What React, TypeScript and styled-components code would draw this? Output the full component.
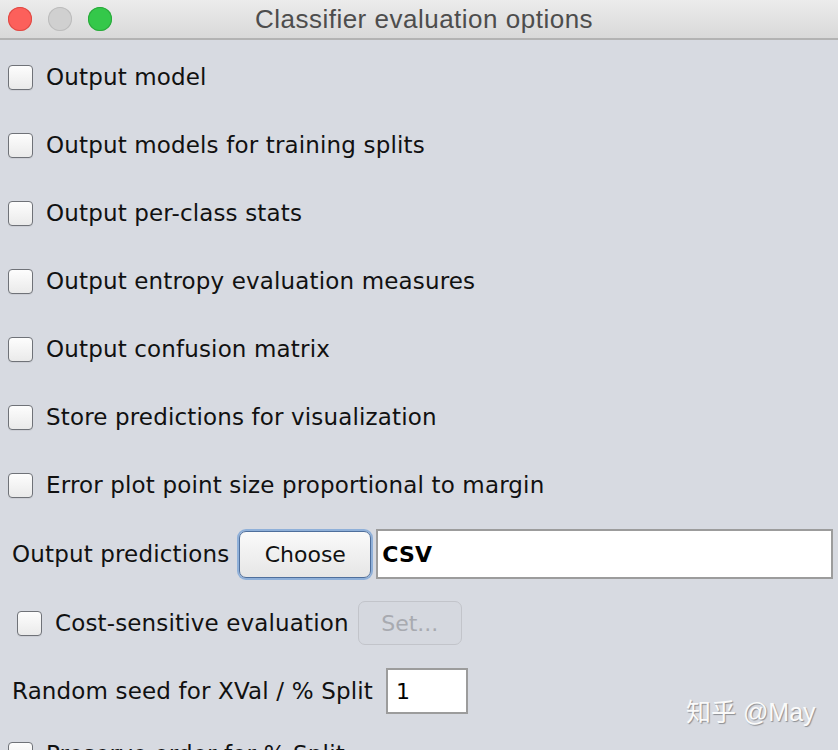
import styled, { createGlobalStyle } from 'styled-components';

const Global = createGlobalStyle`
  html, body {
    margin: 0;
    padding: 0;
    width: 838px;
    height: 750px;
    overflow: hidden;
    background: #d7dae1;
  }
`;

const Window = styled.div`
  position: relative;
  width: 838px;
  height: 750px;
  overflow: hidden;
  background: #d7dae1;
  font-family: "DejaVu Sans", sans-serif;
  color: #111;
`;

const TitleBar = styled.div`
  height: 38px;
  display: flex;
  align-items: center;
  justify-content: center;
  background: linear-gradient(#ececec, #d9d9d9);
  border-bottom: 2px solid #b3b3b3;
  position: relative;
`;

const Lights = styled.div`
  position: absolute;
  left: 8px;
  top: 7px;
  display: flex;
  gap: 16px;
`;

const Light = styled.span<{ $c: string; $b: string }>`
  width: 24px;
  height: 24px;
  border-radius: 50%;
  background: ${p => p.$c};
  box-shadow: inset 0 0 0 1px ${p => p.$b};
`;

const Title = styled.div`
  font-family: "Liberation Sans", Arial, sans-serif;
  font-size: 26px;
  letter-spacing: 0.5px;
  color: #4d4d4d;
  margin-left: 10px;
`;

const Body = styled.div`
  display: flex;
  flex-direction: column;
  padding-top: 3px;
`;

const CheckRow = styled.label<{ $indent?: number; $h?: number }>`
  display: flex;
  align-items: center;
  height: ${p => p.$h ?? 68}px;
  padding-left: ${p => p.$indent ?? 8}px;
  font-size: 23px;
  letter-spacing: 0.15px;
  white-space: nowrap;
`;

const Box = styled.span`
  width: 23px;
  height: 23px;
  border: 1px solid #6f7278;
  border-radius: 4px;
  background: linear-gradient(#fdfdfd, #eaeaea);
  box-shadow: 0 1px 0 rgba(0, 0, 0, 0.05);
  margin-right: 13px;
  flex: none;
`;

const FieldRow = styled.div<{ $h: number }>`
  display: flex;
  align-items: center;
  height: ${p => p.$h}px;
  padding-left: 12px;
  font-size: 23px;
  letter-spacing: 0.15px;
  white-space: nowrap;
`;

const Label = styled.span<{ $gap: number }>`
  margin-right: ${p => p.$gap}px;
`;

const Button = styled.button<{ $w: number; $disabled?: boolean; $focus?: boolean }>`
  width: ${p => p.$w}px;
  height: ${p => (p.$disabled ? 44 : 47)}px;
  font-family: "DejaVu Sans", sans-serif;
  font-size: 22px;
  color: ${p => (p.$disabled ? '#a8aab0' : '#111')};
  border-radius: 7px;
  border: 1px solid ${p => (p.$disabled ? '#c2c4ca' : '#4f6f9c')};
  background: ${p => (p.$disabled ? '#d5d8df' : 'linear-gradient(#fafafa, #e6e6e6)')};
  box-shadow: ${p => (p.$focus ? '0 0 0 2px #8fb0d9' : 'none')};
  padding: 0;
  margin-right: ${p => (p.$focus ? 5 : 0)}px;
  flex: none;
`;

const TextField = styled.div<{ $w: number; $h: number; $bold?: boolean; $pad: number }>`
  width: ${p => p.$w}px;
  height: ${p => p.$h}px;
  box-sizing: border-box;
  border: 2px solid #9c9c9c;
  background: #fff;
  display: flex;
  align-items: center;
  padding-left: ${p => p.$pad}px;
  font-family: "DejaVu Sans", sans-serif;
  font-size: 22px;
  font-weight: ${p => (p.$bold ? 600 : 400)};
  color: #000;
  flex: none;
`;

const Watermark = styled.div`
  position: absolute;
  left: 686px;
  top: 692px;
  font-family: "Liberation Sans", "Noto Sans CJK SC", sans-serif;
  font-size: 25px;
  color: #fafafa;
  text-shadow: 1px 1px 1px rgba(0, 0, 0, 0.35);
`;

const options = [
  'Output model',
  'Output models for training splits',
  'Output per-class stats',
  'Output entropy evaluation measures',
  'Output confusion matrix',
  'Store predictions for visualization',
  'Error plot point size proportional to margin',
];

export default function App() {
  return (
    <Window>
      <Global />
      <TitleBar>
        <Lights>
          <Light $c="#fc605b" $b="#de4a44" />
          <Light $c="#d0d0d0" $b="#bcbcbc" />
          <Light $c="#34c84a" $b="#2aa83b" />
        </Lights>
        <Title>Classifier evaluation options</Title>
      </TitleBar>
      <Body>
        {options.map(o => (
          <CheckRow key={o}>
            <Box />
            {o}
          </CheckRow>
        ))}
        <FieldRow $h={70}>
          <Label $gap={10}>Output predictions</Label>
          <Button $w={132} $focus>Choose</Button>
          <TextField $w={457} $h={50} $pad={4} $bold>CSV</TextField>
        </FieldRow>
        <CheckRow $indent={17}>
          <Box />
          <Label $gap={9}>Cost-sensitive evaluation</Label>
          <Button $w={104} $disabled>Set...</Button>
        </CheckRow>
        <FieldRow $h={68}>
          <Label $gap={13}>Random seed for XVal / % Split</Label>
          <TextField $w={82} $h={46} $pad={8}>1</TextField>
        </FieldRow>
        <CheckRow $h={58}>
          <Box />
          Preserve order for % Split
        </CheckRow>
      </Body>
      <Watermark>知乎 @May</Watermark>
    </Window>
  );
}
